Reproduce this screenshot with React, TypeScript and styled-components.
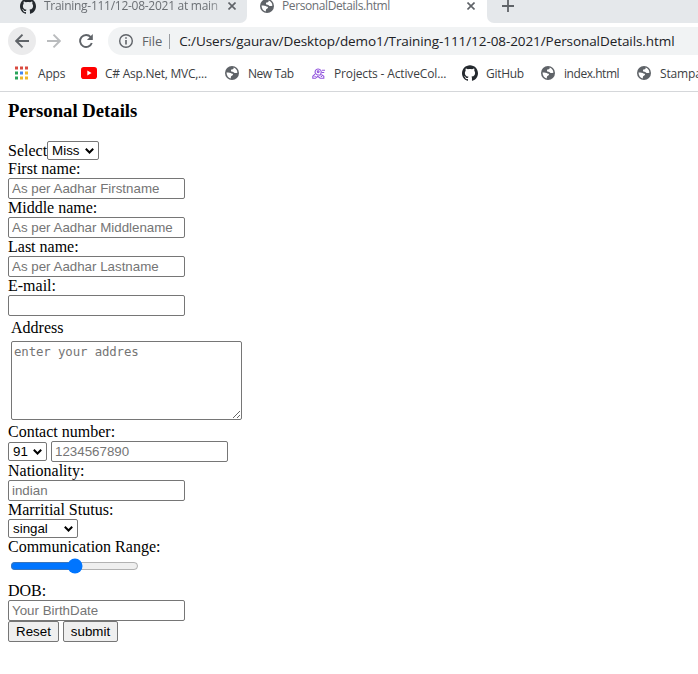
import React from "react";
import styled, { createGlobalStyle } from "styled-components";

const GlobalStyle = createGlobalStyle`
  * { box-sizing: border-box; }
  body { margin: 0; background: #fff; overflow: hidden; }
`;

const Window = styled.div`
  width: 698px;
  height: 674px;
  overflow: hidden;
  background: #fff;
`;

const BrowserFrame = styled.header`
  height: 92px;
  border-bottom: 1px solid #d5d7da;
  font-family: "Open Sans", "Noto Sans", sans-serif;
  color: #3c4043;
  white-space: nowrap;
`;

const TabStrip = styled.div`
  display: flex;
  height: 23px;
  background: #fff;
`;

const Tab = styled.div<{ $width: number; $pad: number; $active?: boolean }>`
  display: flex;
  align-items: flex-start;
  width: ${(p) => p.$width}px;
  padding-left: ${(p) => p.$pad}px;
  flex: none;
  background: ${(p) => (p.$active ? "#fff" : "#e5e8eb")};
  border-bottom-right-radius: ${(p) => (p.$active ? 0 : 7)}px;
`;

const TabIcon = styled.span`
  display: flex;
  align-items: center;
  height: 12px;
`;

const TabTitle = styled.span<{ $width: number; $spacing: number; $fade?: boolean }>`
  width: ${(p) => p.$width}px;
  margin-left: 8px;
  font-size: 12px;
  line-height: 16px;
  margin-top: -2px;
  letter-spacing: ${(p) => p.$spacing}px;
  color: #6b6f74;
  mask-image: ${(p) => (p.$fade ? "linear-gradient(to right, #000 88%, rgba(0, 0, 0, .25))" : "none")};
`;

const StripEnd = styled.div`
  flex: 1;
  padding-left: 15px;
  background: #e5e8eb;
  border-bottom-left-radius: 7px;
`;

const Toolbar = styled.div`
  display: flex;
  align-items: center;
  height: 36px;
  padding-left: 8px;
`;

const NavButton = styled.span<{ $hover?: boolean; $gap: number }>`
  display: flex;
  align-items: center;
  justify-content: center;
  width: 28px;
  height: 28px;
  margin-right: ${(p) => p.$gap}px;
  border-radius: 50%;
  background: ${(p) => (p.$hover ? "#ebebec" : "transparent")};
`;

const AddressBar = styled.div`
  display: flex;
  flex: 1;
  align-items: center;
  height: 28px;
  padding-left: 11px;
  border-radius: 14px 0 0 14px;
  background: #f1f3f4;
`;

const Scheme = styled.span`
  margin-left: 9px;
  padding-right: 7px;
  font-size: 13px;
  letter-spacing: -0.1px;
  color: #5f6368;
  border-right: 1px solid #9a9da1;
  line-height: 15px;
`;

const Url = styled.span`
  margin-left: 9px;
  font-size: 13.5px;
  letter-spacing: -0.08px;
  color: #202124;
`;

const Bookmarks = styled.div`
  display: flex;
  align-items: center;
  height: 28px;
  padding-left: 14px;
`;

const Bookmark = styled.div<{ $width: number }>`
  display: flex;
  align-items: center;
  flex: none;
  width: ${(p) => p.$width}px;
`;

const BookmarkLabel = styled.span<{ $gap: number; $spacing: number }>`
  margin-left: ${(p) => p.$gap}px;
  font-size: 12px;
  letter-spacing: ${(p) => p.$spacing}px;
`;

const Icon = styled.svg`
  display: block;
  flex: none;
`;

const Page = styled.main`
  padding: 0 8px;
  font-family: "Liberation Serif", serif;
  font-size: 16px;
  line-height: 18px;
  color: #000;
`;

const Title = styled.h3`
  height: 49px;
  margin: 0;
  padding-top: 8px;
  font-size: 18.72px;
  line-height: 21px;
`;

const Label = styled.label`
  display: block;
  height: 18px;
`;

const Row = styled.div<{ $gap?: number }>`
  display: flex;
  align-items: center;
  gap: ${(p) => p.$gap ?? 0}px;
`;

const TextInput = styled.input`
  display: block;
  width: 177px;
  height: 21px;
  padding: 1px 3px;
  border: 1px solid #767676;
  border-radius: 2px;
  background: #fff;
  font: 13.333px "Liberation Sans", sans-serif;
  &::placeholder { color: #757575; }
`;

const SelectFrame = styled.div<{ $width: number }>`
  display: flex;
  align-items: center;
  justify-content: space-between;
  width: ${(p) => p.$width}px;
  height: 19px;
  padding: 0 4px;
  border: 1px solid #767676;
  border-radius: 2px;
  font: 13.333px "Liberation Sans", sans-serif;
`;

const AddressBlock = styled.div`
  height: 107px;
  padding: 3px 3px 0;
`;

const AddressInput = styled.textarea`
  display: block;
  width: 231px;
  height: 79px;
  margin-top: 4px;
  padding: 2px;
  border: 1px solid #767676;
  border-radius: 2px;
  font: 12.4px "DejaVu Sans Mono", monospace;
  letter-spacing: -0.13px;
  resize: both;
  &::placeholder { color: #757575; }
`;

const Range = styled.input`
  display: block;
  width: 129px;
  height: 16px;
  margin: 2px 2px 8px;
`;

const Button = styled.button<{ $width: number }>`
  width: ${(p) => p.$width}px;
  height: 21px;
  padding: 0;
  border: 1px solid #767676;
  border-radius: 2px;
  background: #efefef;
  font: 13.333px "Liberation Sans", sans-serif;
  color: #000;
`;

const Globe = () => (
  <Icon width="14" height="14" viewBox="0 0 14 14">
    <circle cx="7" cy="7" r="7" fill="#5f6368" />
    <path d="M8.6 1.6c.2 1.4-.5 1.9-1.6 1.9S5.700 4.200 6.200 5.200c.5.9 1.900.4 2.700 1.300.6.8 1.900.7 3.500.2C12.300 4.200 10.900 2.300 8.600 1.600ZM1.500 6.500c1.500-.2 3.300-.2 4.200.5.800.8 1.900.4 2.300 1.300.3.900-.9 1.300-1.600 1.700-.7.5-.3 1.500-.7 2.400C3.300 11.900 1.500 9.500 1.500 6.500Z" fill="#fff" />
  </Icon>
);

const GitHub = () => (
  <Icon width="16" height="16" viewBox="0 0 24 24" fill="#24292e">
    <path d="M12 .297c-6.63 0-12 5.373-12 12 0 5.303 3.438 9.8 8.205 11.385.6.113.82-.258.82-.577 0-.285-.01-1.04-.015-2.04-3.338.724-4.042-1.61-4.042-1.61C4.422 18.07 3.633 17.7 3.633 17.7c-1.087-.744.084-.729.084-.729 1.205.084 1.838 1.236 1.838 1.236 1.07 1.835 2.809 1.305 3.495.998.108-.776.417-1.305.76-1.605-2.665-.3-5.466-1.332-5.466-5.93 0-1.31.465-2.38 1.235-3.22-.135-.303-.54-1.523.105-3.176 0 0 1.005-.322 3.3 1.23.96-.267 1.98-.399 3-.405 1.02.006 2.04.138 3 .405 2.28-1.552 3.285-1.23 3.285-1.23.645 1.653.24 2.873.12 3.176.765.84 1.23 1.91 1.23 3.22 0 4.61-2.805 5.625-5.475 5.92.42.36.81 1.096.81 2.22 0 1.606-.015 2.896-.015 3.286 0 .315.21.69.825.57C20.565 22.092 24 17.592 24 12.297c0-6.627-5.373-12-12-12" />
  </Icon>
);

const Close = () => (
  <Icon width="8" height="8" viewBox="0 0 8 8" stroke="#5f6368" strokeWidth="1.6">
    <path d="m.5.5 7 7m0-7-7 7" />
  </Icon>
);

const Plus = () => (
  <Icon width="12" height="12" viewBox="0 0 12 12" stroke="#5f6368" strokeWidth="1.8">
    <path d="M6 0v12M0 6h12" />
  </Icon>
);

const Arrow = ({ color, forward }: { color: string; forward?: boolean }) => (
  <Icon width="14" height="14" viewBox="0 0 14 14" fill="none" stroke={color} strokeWidth="1.9">
    <path d={forward ? "M0 7h13M6.5.7 12.8 7l-6.3 6.3" : "M14 7H1M7.5.7 1.2 7l6.3 6.3"} />
  </Icon>
);

const Reload = () => (
  <Icon width="14" height="14" viewBox="0 0 14 14">
    <path d="M11.7 3.1A6 6 0 1 0 12.8 9" fill="none" stroke="#5f6368" strokeWidth="1.9" />
    <path d="M13.8 0v6H7.9Z" fill="#5f6368" />
  </Icon>
);

const Info = () => (
  <Icon width="14" height="14" viewBox="0 0 14 14">
    <circle cx="7" cy="7" r="6.3" fill="none" stroke="#5f6368" strokeWidth="1.4" />
    <path d="M7 3.2v1.5M7 6.1v4.5" stroke="#5f6368" strokeWidth="1.6" />
  </Icon>
);

const appColors = ["#d94a40", "#d94a40", "#d94a40", "#29a35a", "#4285f4", "#efb72b", "#29a35a", "#efb72b", "#efb72b"];

const Apps = () => (
  <Icon width="14" height="14" viewBox="0 0 14 14">
    {appColors.map((color, i) => (
      <rect key={i} x={1 + (i % 3) * 5} y={Math.floor(i / 3) * 5 + 0.5} width="3" height="3" fill={color} />
    ))}
  </Icon>
);

const YouTube = () => (
  <Icon width="16" height="12" viewBox="0 0 16 12">
    <rect width="16" height="12" rx="2.8" fill="#f00" />
    <path d="m6.3 3.4 4.3 2.6-4.3 2.6Z" fill="#fff" />
  </Icon>
);

const ActiveCollab = () => (
  <Icon width="13" height="11" viewBox="0 0 13 11" fill="none" stroke="#9254de" strokeWidth="1.1">
    <path d="M3.5 5.600A3.100 3.100 0 1 1 9 5.300L8 7.200 5.200 6.800Z" />
    <circle cx="6.200" cy="3.800" r=".9" />
    <path d="M10 2.200h3M9.600 4.500h2.600M3 6.200.8 8.300v2h2.700l2.200-2 2.500 2h3.600V8.200L9.300 6.500M2.500 8.500h1.200M8.800 8.500H10" />
  </Icon>
);

const Chevron = () => (
  <Icon width="9" height="6" viewBox="0 0 9 6" fill="none" stroke="#000" strokeWidth="2">
    <path d="m.8.8 3.7 3.7L8.2.8" />
  </Icon>
);

const Select = ({ value, width }: { value: string; width: number }) => (
  <SelectFrame $width={width}>
    {value}
    <Chevron />
  </SelectFrame>
);

const TextField = ({ label, placeholder }: { label: string; placeholder?: string }) => (
  <div>
    <Label>{label}</Label>
    <TextInput placeholder={placeholder} />
  </div>
);

const bookmarks = [
  { icon: <Apps />, label: "Apps", width: 67, gap: 10, spacing: -0.2 },
  { icon: <YouTube />, label: "C# Asp.Net, MVC,...", width: 144, gap: 8, spacing: -0.25 },
  { icon: <Globe />, label: "New Tab", width: 87, gap: 9, spacing: -0.45 },
  { icon: <ActiveCollab />, label: "Projects - ActiveCol...", width: 150, gap: 9, spacing: -0.15 },
  { icon: <GitHub />, label: "GitHub", width: 79, gap: 8, spacing: -0.3 },
  { icon: <Globe />, label: "index.html", width: 96, gap: 9, spacing: -0.45 },
  { icon: <Globe />, label: "Stampa", width: 80, gap: 9, spacing: -0.15 },
];

export default function App() {
  return (
    <Window>
      <GlobalStyle />
      <BrowserFrame>
        <TabStrip>
          <Tab $width={247} $pad={20}>
            <TabIcon><GitHub /></TabIcon>
            <TabTitle $width={184} $spacing={-0.27} $fade>Training-111/12-08-2021 at main</TabTitle>
            <TabIcon><Close /></TabIcon>
          </Tab>
          <Tab $width={240} $pad={13} $active>
            <TabIcon><Globe /></TabIcon>
            <TabTitle $width={185} $spacing={-0.4}>PersonalDetails.html</TabTitle>
            <TabIcon><Close /></TabIcon>
          </Tab>
          <StripEnd><TabIcon><Plus /></TabIcon></StripEnd>
        </TabStrip>
        <Toolbar>
          <NavButton $hover $gap={4}><Arrow color="#5f6368" /></NavButton>
          <NavButton $gap={4}><Arrow color="#babcbe" forward /></NavButton>
          <NavButton $gap={8}><Reload /></NavButton>
          <AddressBar>
            <Info />
            <Scheme>File</Scheme>
            <Url>C:/Users/gaurav/Desktop/demo1/Training-111/12-08-2021/PersonalDetails.html</Url>
          </AddressBar>
        </Toolbar>
        <Bookmarks>
          {bookmarks.map((b, i) => (
            <Bookmark key={i} $width={b.width}>
              {b.icon}
              <BookmarkLabel $gap={b.gap} $spacing={b.spacing}>{b.label}</BookmarkLabel>
            </Bookmark>
          ))}
        </Bookmarks>
      </BrowserFrame>
      <Page>
        <Title>Personal Details</Title>
        <Row>
          <span>Select</span>
          <Select value="Miss" width={52} />
        </Row>
        <TextField label="First name:" placeholder="As per Aadhar Firstname" />
        <TextField label="Middle name:" placeholder="As per Aadhar Middlename" />
        <TextField label="Last name:" placeholder="As per Aadhar Lastname" />
        <TextField label="E-mail:" />
        <AddressBlock>
          <Label>Address</Label>
          <AddressInput placeholder="enter your addres" />
        </AddressBlock>
        <Label>Contact number:</Label>
        <Row $gap={4}>
          <Select value="91" width={39} />
          <TextInput placeholder="1234567890" />
        </Row>
        <TextField label="Nationality:" placeholder="indian" />
        <Label>Marritial Stutus:</Label>
        <Select value="singal" width={70} />
        <Label>Communication Range:</Label>
        <Range type="range" defaultValue={50} />
        <TextField label="DOB:" placeholder="Your BirthDate" />
        <Row $gap={4}>
          <Button $width={51}>Reset</Button>
          <Button $width={55}>submit</Button>
        </Row>
      </Page>
    </Window>
  );
}
